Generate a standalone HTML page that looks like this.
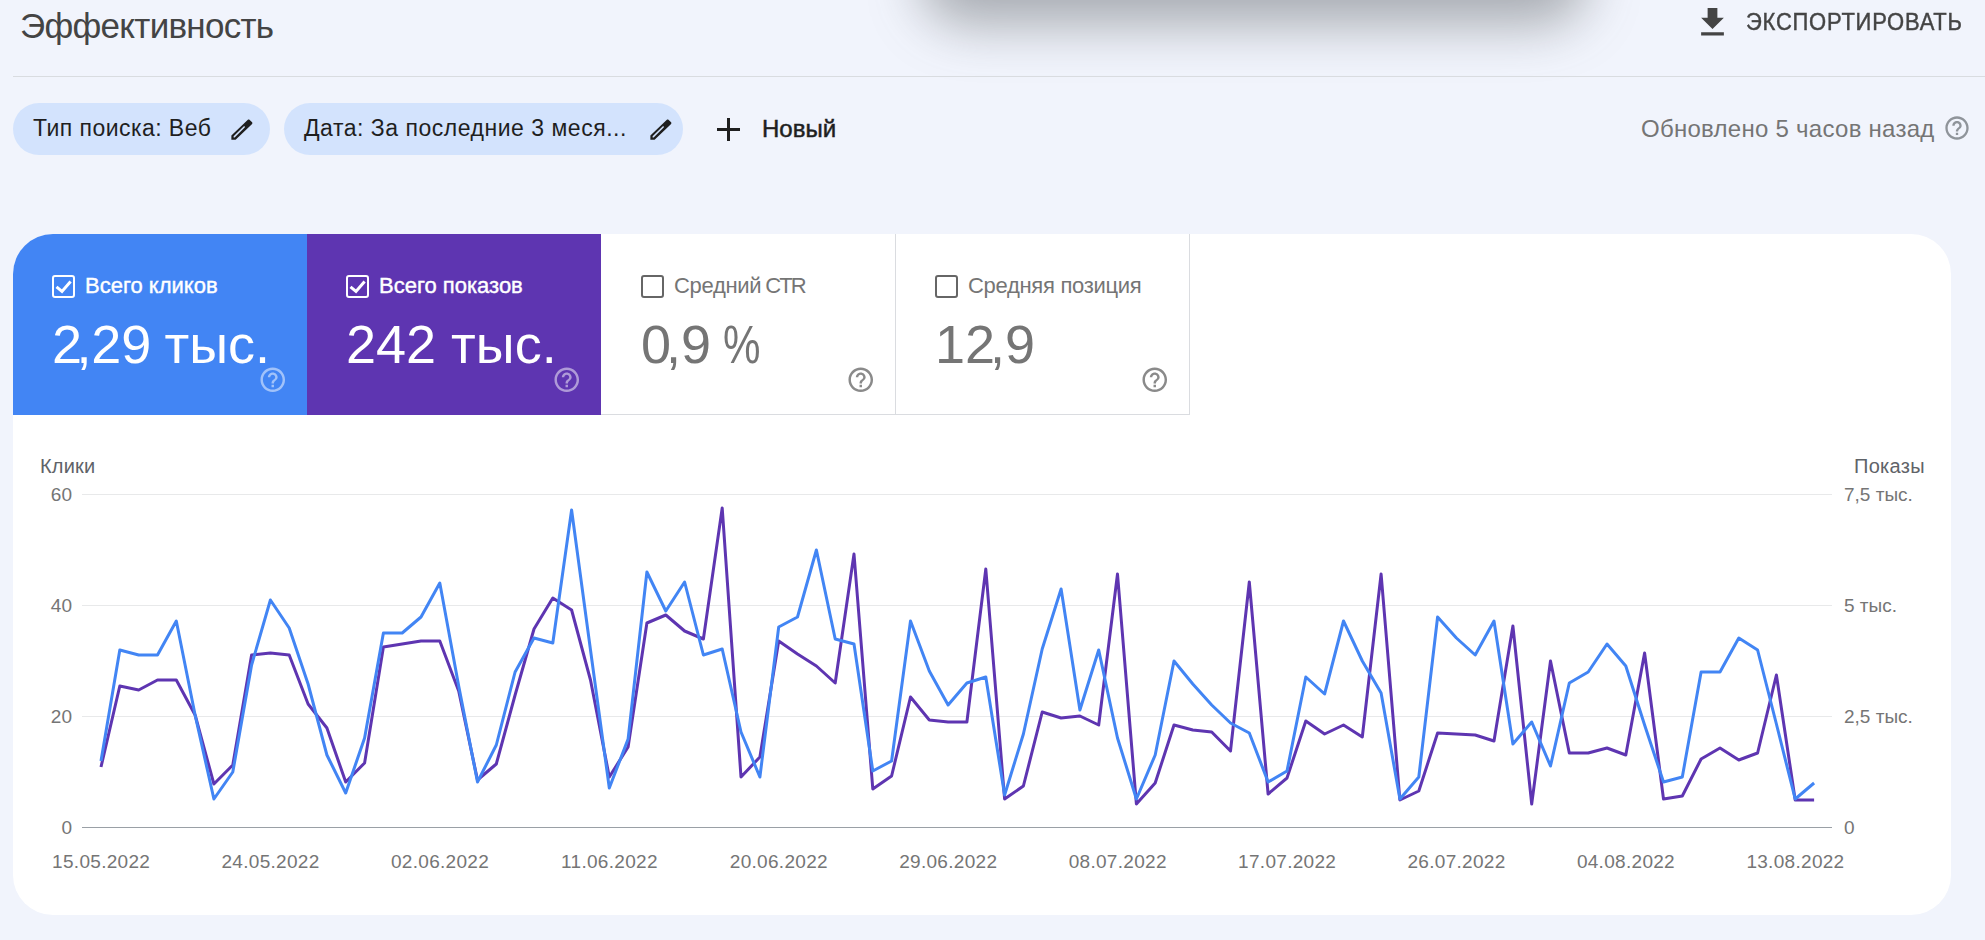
<!DOCTYPE html>
<html><head><meta charset="utf-8">
<style>
*{margin:0;padding:0;box-sizing:border-box}
html,body{width:1985px;height:940px;overflow:hidden;background:#f1f4fc;font-family:"Liberation Sans",sans-serif}
.a{position:absolute;white-space:nowrap;line-height:1}
#shadow{position:absolute;left:920px;top:-70px;width:668px;height:95px;border-radius:60px;background:rgba(60,64,67,.40);filter:blur(26px)}
#hr{position:absolute;left:13px;top:76px;width:1972px;height:1px;background:#d9dce0}
.chip{position:absolute;top:103px;height:52px;border-radius:26px;background:#d3e3fd}
#card{position:absolute;left:13px;top:234px;width:1938px;height:681px;background:#fff;border-radius:40px;overflow:hidden}
.tile{position:absolute;top:0;height:180px;width:294px}
.cb{position:absolute;width:23px;height:23px;border:2px solid #fff;border-radius:3px}
.grid{position:absolute;left:82px;width:1750px;height:1px;background:#e8e9ea}
.yl{position:absolute;line-height:1;font-size:19px;color:#757575;white-space:nowrap}
.dl{position:absolute;line-height:1;font-size:19px;color:#757575;white-space:nowrap;width:140px;text-align:center;top:851.6px;letter-spacing:0.3px;text-indent:0.3px}
</style></head><body>
<div id="shadow"></div>
<div class="a" style="left:20px;top:7.6px;font-size:35px;color:#444;letter-spacing:-0.72px">Эффективность</div>
<svg style="position:absolute;left:1693px;top:3.3px" width="39" height="39" viewBox="0 0 24 24"><path fill="#444" d="M19 9h-4V3H9v6H5l7 7 7-7zM5 18v2h14v-2H5z"/></svg>
<div class="a" style="left:1746px;top:10.4px;font-size:22px;color:#444;letter-spacing:0.75px;-webkit-text-stroke:0.4px #444;transform:scaleY(1.1);transform-origin:0 0">ЭКСПОРТИРОВАТЬ</div>
<div id="hr"></div>

<div class="chip" style="left:13px;width:257px"></div>
<div class="a" style="left:33px;top:117px;font-size:23px;color:#1f1f1f;letter-spacing:0.45px">Тип поиска: Веб</div>
<svg style="position:absolute;left:228px;top:115.5px" width="27" height="27" viewBox="0 0 24 24"><path fill="#1f1f1f" fill-rule="evenodd" d="M3 17.25V21h3.75L19.58 8.87l1.83-1.83c.39-.39.39-1.02 0-1.41l-2.34-2.34c-.2-.2-.45-.29-.71-.29s-.51.1-.7.29L3 17.25zM5.92 19H5v-.92l9.3-9.3.92.92L5.92 19z"/></svg>
<div class="chip" style="left:284px;width:399px"></div>
<div class="a" style="left:304px;top:117px;font-size:23px;color:#1f1f1f;letter-spacing:0.52px">Дата: За последние 3 меся...</div>
<svg style="position:absolute;left:647px;top:115.5px" width="27" height="27" viewBox="0 0 24 24"><path fill="#1f1f1f" fill-rule="evenodd" d="M3 17.25V21h3.75L19.58 8.87l1.83-1.83c.39-.39.39-1.02 0-1.41l-2.34-2.34c-.2-.2-.45-.29-.71-.29s-.51.1-.7.29L3 17.25zM5.92 19H5v-.92l9.3-9.3.92.92L5.92 19z"/></svg>
<div style="position:absolute;left:717px;top:128px;width:23px;height:3px;background:#1f1f1f"></div>
<div style="position:absolute;left:727px;top:118px;width:3px;height:23px;background:#1f1f1f"></div>
<div class="a" style="left:762px;top:116.8px;font-size:24px;color:#1f1f1f;letter-spacing:0px;-webkit-text-stroke:0.5px #1f1f1f">Новый</div>
<div class="a" style="left:1641px;top:116.9px;font-size:24px;color:#757575;letter-spacing:0.27px">Обновлено 5 часов назад</div>
<svg style="position:absolute;left:1942.5px;top:114.3px" width="28" height="28" viewBox="0 0 24 24"><path fill="#8f949a" d="M11 18h2v-2h-2v2zm1-16C6.48 2 2 6.48 2 12s4.48 10 10 10 10-4.48 10-10S17.52 2 12 2zm0 18c-4.41 0-8-3.59-8-8s3.59-8 8-8 8 3.59 8 8-3.59 8-8 8zm0-14c-2.21 0-4 1.79-4 4h2c0-1.1.9-2 2-2s2 .9 2 2c0 2-3 1.75-3 5h2c0-2.25 3-2.5 3-5 0-2.21-1.79-4-4-4z"/></svg>

<div id="card">
  <div class="tile" style="left:0;background:#4285f4;height:181px"></div>
  <div class="tile" style="left:294px;background:#5e35b1;height:181px"></div>
  <div class="tile" style="left:588px;border-right:1px solid #dadce0;border-bottom:1px solid #dadce0;width:295px;height:181px"></div>
  <div class="tile" style="left:882px;border-right:1px solid #dadce0;border-bottom:1px solid #dadce0;width:295px;height:181px"></div>
</div>

<!-- tile contents (page coords) -->
<div class="cb" style="left:52px;top:275px"></div>
<svg style="position:absolute;left:52px;top:275px" width="23" height="23" viewBox="0 0 23 23"><path d="M4.5 11.8l5.5 4.6 8.6-9.8" fill="none" stroke="#fff" stroke-width="3"/></svg>
<div class="a" style="left:85px;top:274.8px;font-size:22px;color:#fff;-webkit-text-stroke:0.4px #fff">Всего кликов</div>
<div class="a" style="left:52px;top:316.8px;font-size:54px;color:#fff">2<span style="margin-left:-5.5px;letter-spacing:-0.3px">,</span>29<span style="letter-spacing:-1.9px"> </span>тыс.</div>
<svg style="position:absolute;left:258.25px;top:364.55px" width="29.5" height="29.5" viewBox="0 0 24 24"><path fill="rgba(255,255,255,.5)" d="M11 18h2v-2h-2v2zm1-16C6.48 2 2 6.48 2 12s4.48 10 10 10 10-4.48 10-10S17.52 2 12 2zm0 18c-4.41 0-8-3.59-8-8s3.59-8 8-8 8 3.59 8 8-3.59 8-8 8zm0-14c-2.21 0-4 1.79-4 4h2c0-1.1.9-2 2-2s2 .9 2 2c0 2-3 1.75-3 5h2c0-2.25 3-2.5 3-5 0-2.21-1.79-4-4-4z"/></svg>

<div class="cb" style="left:346px;top:275px"></div>
<svg style="position:absolute;left:346px;top:275px" width="23" height="23" viewBox="0 0 23 23"><path d="M4.5 11.8l5.5 4.6 8.6-9.8" fill="none" stroke="#fff" stroke-width="3"/></svg>
<div class="a" style="left:379px;top:274.8px;font-size:22px;color:#fff;-webkit-text-stroke:0.4px #fff">Всего показов</div>
<div class="a" style="left:346px;top:316.8px;font-size:54px;color:#fff">242 тыс.</div>
<svg style="position:absolute;left:552.25px;top:364.55px" width="29.5" height="29.5" viewBox="0 0 24 24"><path fill="rgba(255,255,255,.5)" d="M11 18h2v-2h-2v2zm1-16C6.48 2 2 6.48 2 12s4.48 10 10 10 10-4.48 10-10S17.52 2 12 2zm0 18c-4.41 0-8-3.59-8-8s3.59-8 8-8 8 3.59 8 8-3.59 8-8 8zm0-14c-2.21 0-4 1.79-4 4h2c0-1.1.9-2 2-2s2 .9 2 2c0 2-3 1.75-3 5h2c0-2.25 3-2.5 3-5 0-2.21-1.79-4-4-4z"/></svg>

<div class="cb" style="left:641px;top:275px;border-color:#666"></div>
<div class="a" style="left:674px;top:274.8px;font-size:22px;color:#757575;letter-spacing:-0.3px">Средний <span style="letter-spacing:-2px;margin-left:-1.8px">CTR</span></div>
<div class="a" style="left:641px;top:316.8px;font-size:54px;color:#757575">0<span style="margin-left:-5px">,</span>9<span style="letter-spacing:-2.8px"> </span><span style="display:inline-block;transform:scaleX(0.78);transform-origin:0 0">%</span></div>
<svg style="position:absolute;left:846.25px;top:364.55px" width="29.5" height="29.5" viewBox="0 0 24 24"><path fill="#8a8a8a" d="M11 18h2v-2h-2v2zm1-16C6.48 2 2 6.48 2 12s4.48 10 10 10 10-4.48 10-10S17.52 2 12 2zm0 18c-4.41 0-8-3.59-8-8s3.59-8 8-8 8 3.59 8 8-3.59 8-8 8zm0-14c-2.21 0-4 1.79-4 4h2c0-1.1.9-2 2-2s2 .9 2 2c0 2-3 1.75-3 5h2c0-2.25 3-2.5 3-5 0-2.21-1.79-4-4-4z"/></svg>

<div class="cb" style="left:935px;top:275px;border-color:#666"></div>
<div class="a" style="left:968px;top:274.8px;font-size:22px;color:#757575;letter-spacing:-0.3px">Средняя позиция</div>
<div class="a" style="left:935px;top:316.8px;font-size:54px;color:#757575">12<span style="margin-left:-5px">,</span>9</div>
<svg style="position:absolute;left:1140.25px;top:364.55px" width="29.5" height="29.5" viewBox="0 0 24 24"><path fill="#8a8a8a" d="M11 18h2v-2h-2v2zm1-16C6.48 2 2 6.48 2 12s4.48 10 10 10 10-4.48 10-10S17.52 2 12 2zm0 18c-4.41 0-8-3.59-8-8s3.59-8 8-8 8 3.59 8 8-3.59 8-8 8zm0-14c-2.21 0-4 1.79-4 4h2c0-1.1.9-2 2-2s2 .9 2 2c0 2-3 1.75-3 5h2c0-2.25 3-2.5 3-5 0-2.21-1.79-4-4-4z"/></svg>

<!-- chart -->
<div class="a" style="left:40px;top:455.9px;font-size:20px;color:#5f6368;letter-spacing:0.2px">Клики</div>
<div class="a" style="left:1854px;top:455.9px;font-size:20px;color:#5f6368;letter-spacing:0.3px">Показы</div>
<div class="grid" style="top:494px"></div>
<div class="grid" style="top:605px"></div>
<div class="grid" style="top:716px"></div>
<div class="grid" style="top:827px;background:#9aa0a6"></div>
<div class="yl" style="right:1913px;top:484.6px">60</div>
<div class="yl" style="right:1913px;top:595.6px">40</div>
<div class="yl" style="right:1913px;top:706.6px">20</div>
<div class="yl" style="right:1913px;top:817.6px">0</div>
<div class="yl" style="left:1844px;top:484.6px">7,5 тыс.</div>
<div class="yl" style="left:1844px;top:595.6px">5 тыс.</div>
<div class="yl" style="left:1844px;top:706.6px">2,5 тыс.</div>
<div class="yl" style="left:1844px;top:817.6px">0</div>
<div class="dl" style="left:31px">15.05.2022</div>
<div class="dl" style="left:200.4px">24.05.2022</div>
<div class="dl" style="left:369.9px">02.06.2022</div>
<div class="dl" style="left:539.3px">11.06.2022</div>
<div class="dl" style="left:708.7px">20.06.2022</div>
<div class="dl" style="left:878.1px">29.06.2022</div>
<div class="dl" style="left:1047.6px">08.07.2022</div>
<div class="dl" style="left:1217px">17.07.2022</div>
<div class="dl" style="left:1386.4px">26.07.2022</div>
<div class="dl" style="left:1555.8px">04.08.2022</div>
<div class="dl" style="left:1725.3px">13.08.2022</div>
<svg style="position:absolute;left:0;top:0" width="1985" height="940">
<path d="M101.0 767.0 L119.8 686.0 L138.7 690.0 L157.5 680.0 L176.3 680.0 L195.1 715.0 L213.9 784.0 L232.8 765.0 L251.6 655.0 L270.4 653.0 L289.2 655.0 L308.1 704.0 L326.9 728.0 L345.7 782.0 L364.6 763.0 L383.4 647.0 L402.2 644.0 L421.0 641.0 L439.8 641.0 L458.7 691.0 L477.5 780.0 L496.3 764.0 L515.1 695.0 L534.0 629.0 L552.8 598.0 L571.6 610.0 L590.5 680.0 L609.3 777.0 L628.1 747.0 L646.9 623.0 L665.8 615.0 L684.6 631.0 L703.4 639.0 L722.2 508.0 L741.0 777.0 L759.9 757.0 L778.7 641.0 L797.5 654.0 L816.4 666.0 L835.2 683.0 L854.0 554.0 L872.8 789.0 L891.6 776.0 L910.5 697.0 L929.3 720.0 L948.1 722.0 L966.9 722.0 L985.8 569.0 L1004.6 799.0 L1023.4 786.0 L1042.2 712.0 L1061.1 718.0 L1079.9 716.0 L1098.7 725.0 L1117.5 574.0 L1136.4 804.0 L1155.2 783.0 L1174.0 725.0 L1192.8 730.0 L1211.7 732.0 L1230.5 751.0 L1249.3 582.0 L1268.1 794.0 L1287.0 778.0 L1305.8 721.0 L1324.6 734.0 L1343.5 725.0 L1362.3 737.0 L1381.1 574.0 L1399.9 800.0 L1418.8 791.0 L1437.6 733.0 L1456.4 734.0 L1475.2 735.0 L1494.0 741.0 L1512.9 626.0 L1531.7 804.0 L1550.5 661.0 L1569.3 753.0 L1588.2 753.0 L1607.0 748.0 L1625.8 755.0 L1644.6 653.0 L1663.5 799.0 L1682.3 796.0 L1701.1 759.0 L1720.0 748.0 L1738.8 760.0 L1757.6 753.0 L1776.4 675.0 L1795.2 800.0 L1814.1 800.0" fill="none" stroke="#5e35b1" stroke-width="3" stroke-linejoin="round" stroke-linecap="butt"/>
<path d="M101.0 761.0 L119.8 650.0 L138.7 655.0 L157.5 655.0 L176.3 621.0 L195.1 715.0 L213.9 799.0 L232.8 772.0 L251.6 665.0 L270.4 600.0 L289.2 628.0 L308.1 684.0 L326.9 755.0 L345.7 793.0 L364.6 738.0 L383.4 633.0 L402.2 633.0 L421.0 617.0 L439.8 583.0 L458.7 686.0 L477.5 782.0 L496.3 745.0 L515.1 672.0 L534.0 638.0 L552.8 643.0 L571.6 510.0 L590.5 650.0 L609.3 788.0 L628.1 739.0 L646.9 572.0 L665.8 611.0 L684.6 582.0 L703.4 655.0 L722.2 649.0 L741.0 732.0 L759.9 777.0 L778.7 627.0 L797.5 617.0 L816.4 550.0 L835.2 639.0 L854.0 644.0 L872.8 771.0 L891.6 761.0 L910.5 621.0 L929.3 671.0 L948.1 705.0 L966.9 683.0 L985.8 677.0 L1004.6 795.0 L1023.4 734.0 L1042.2 649.0 L1061.1 589.0 L1079.9 710.0 L1098.7 650.0 L1117.5 738.0 L1136.4 799.0 L1155.2 755.0 L1174.0 661.0 L1192.8 684.0 L1211.7 705.0 L1230.5 723.0 L1249.3 733.0 L1268.1 782.0 L1287.0 771.0 L1305.8 677.0 L1324.6 694.0 L1343.5 621.0 L1362.3 661.0 L1381.1 693.0 L1399.9 799.0 L1418.8 777.0 L1437.6 617.0 L1456.4 638.0 L1475.2 655.0 L1494.0 621.0 L1512.9 744.0 L1531.7 722.0 L1550.5 766.0 L1569.3 683.0 L1588.2 672.0 L1607.0 644.0 L1625.8 666.0 L1644.6 725.0 L1663.5 782.0 L1682.3 777.0 L1701.1 672.0 L1720.0 672.0 L1738.8 638.0 L1757.6 650.0 L1776.4 724.0 L1795.2 799.0 L1814.1 783.0" fill="none" stroke="#4285f4" stroke-width="3" stroke-linejoin="round" stroke-linecap="butt"/>
</svg>
</body></html>
